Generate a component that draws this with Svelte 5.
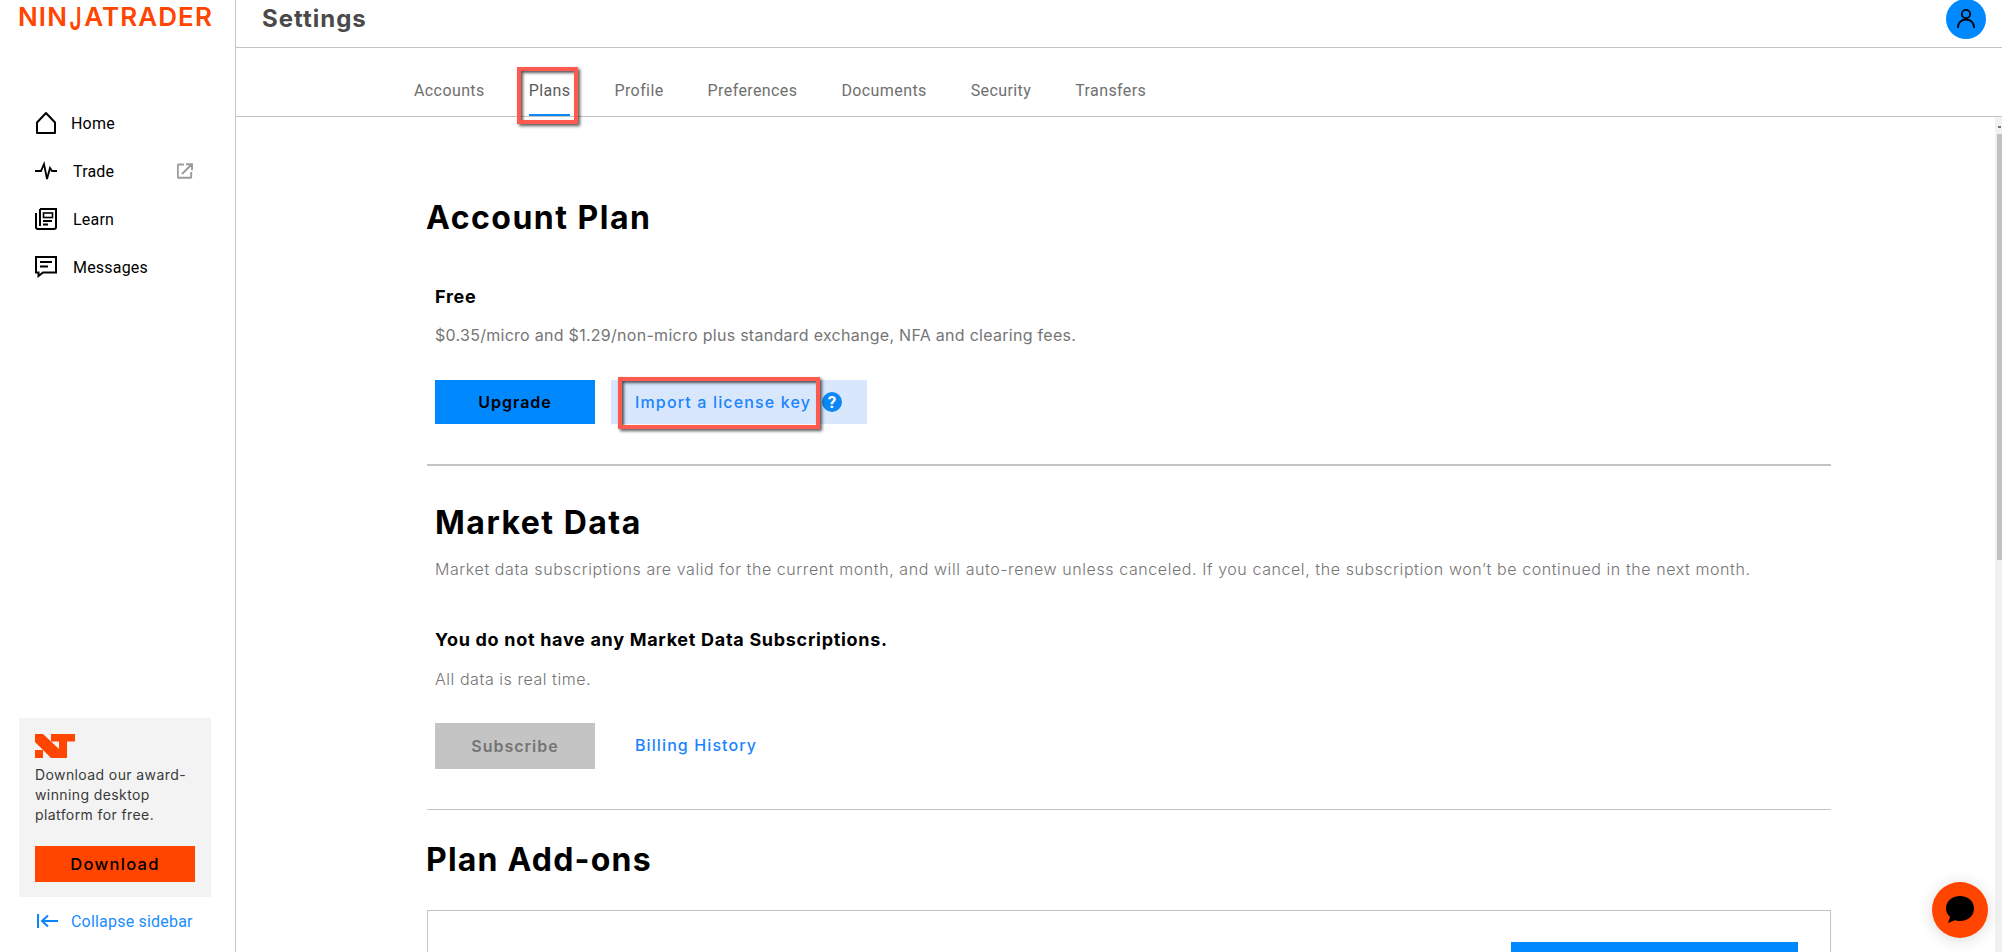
<script>
  const tabs = ['Accounts', 'Plans', 'Profile', 'Preferences', 'Documents', 'Security', 'Transfers'];
</script>

<div class="app">
  <aside class="sidebar">
    <div class="logo">NIN<span class="j">J</span>ATRADER</div>
    <nav class="nav">
      <a class="nav-item">
        <svg class="nav-icon home" width="22" height="24" viewBox="0 0 22 24" fill="none" stroke="#000" stroke-width="2" stroke-linejoin="round"><path d="M2 22V11.5L11 2l9 9.500V22z"/></svg>
        <span>Home</span>
      </a>
      <a class="nav-item">
        <svg class="nav-icon" width="22" height="20" viewBox="0 0 22 20" fill="none" stroke="#000" stroke-width="1.800"><polyline points="0,10 6,10 9,3 12,18 15,7 17,10 22,10"/></svg>
        <span>Trade</span>
        <svg class="ext" width="16" height="16" viewBox="0 0 16 16" fill="none" stroke="#9b9b9b" stroke-width="1.900"><path d="M7 1.500H1.500a.7.700 0 0 0-.7.700v11.600a1 1 0 0 0 1 1h11.700a.7.700 0 0 0 .7-.7V9M5 11l9.500-9.500M9 1.200h6v6"/></svg>
      </a>
      <a class="nav-item">
        <svg class="nav-icon" width="22" height="22" viewBox="0 0 22 22" fill="none" stroke="#000" stroke-width="2"><path d="M5 1h16v18a2 2 0 0 1-2 2H3a2 2 0 0 1-2-2V5M5 1v17"/><rect x="8.500" y="5" width="9" height="4.500" stroke-width="1.600"/><path d="M8 13h9M8 16.500h5" stroke-width="1.800"/></svg>
        <span>Learn</span>
      </a>
      <a class="nav-item">
        <svg class="nav-icon" width="22" height="22" viewBox="0 0 22 22" fill="none" stroke="#000" stroke-width="2"><path d="M1 1h20v15.500H8L3.500 20v-3.500H1z"/><path d="M5 6h12M5 10.500h8"/></svg>
        <span>Messages</span>
      </a>
    </nav>

    <div class="promo">
      <svg class="nt" width="40" height="24" viewBox="0 0 40 24" fill="#ff4500"><polygon points="0,0 8,0 24,15 24,7.500 16,7.500 16,0 40,0 40,7.500 32,7.500 32,24 16,24 0,8"/><rect x="0" y="16" width="8" height="8"/></svg>
      <p>Download our award-winning desktop platform for free.</p>
      <button class="download">Download</button>
    </div>
    <a class="collapse">
      <svg width="22" height="14" viewBox="0 0 22 14" fill="none" stroke="#0a84ff" stroke-width="2"><path d="M1 0v14M21 7H5M11 1.500L5 7l6 5.500"/></svg>
      <span>Collapse sidebar</span>
    </a>
  </aside>

  <div class="main">
    <header class="header">
      <h2>Settings</h2>
      <div class="avatar">
        <svg width="20" height="22" viewBox="0 0 20 22" fill="none" stroke="#000" stroke-width="1.800"><circle cx="10" cy="6" r="4.200"/><path d="M2 20v-1a8 7.500 0 0 1 16 0v1"/></svg>
      </div>
    </header>

    <div class="tabs">
      {#each tabs as t}
        <div class="tab" class:active={t === 'Plans'}>
          {t}
          {#if t === 'Plans'}<span class="mark mark-tab"></span>{/if}
        </div>
      {/each}
    </div>

    <div class="body">
      <div class="content">
        <h1 class="first">Account Plan</h1>
        <div class="indent">
          <h3 class="free">Free</h3>
          <p class="desc">$0.35/micro and $1.29/non-micro plus standard exchange, NFA and clearing fees.</p>
          <div class="actions">
            <button class="btn primary">Upgrade</button>
            <div class="license">
              <span class="license-text">Import a license key<span class="mark mark-license"></span></span>
              <svg width="20" height="20" viewBox="0 0 20 20"><circle cx="10" cy="10" r="10" fill="#0a88f5"/><text x="10" y="16" text-anchor="middle" class="q">?</text></svg>
            </div>
          </div>
        </div>
        <hr class="rule one" />
        <div class="indent">
          <h1 class="market">Market Data</h1>
          <p class="sub">Market data subscriptions are valid for the current month, and will auto-renew unless canceled. If you cancel, the subscription won’t be continued in the next month.</p>
          <h3 class="none">You do not have any Market Data Subscriptions.</h3>
          <p class="real">All data is real time.</p>
          <div class="actions two">
            <button class="btn disabled">Subscribe</button>
            <a class="billing">Billing History</a>
          </div>
        </div>
        <hr class="rule two-r" />
        <h1 class="addons">Plan Add-ons</h1>
        <div class="card"><div class="card-btn"></div></div>
      </div>
      <div class="scrollbar"><span class="arrow"></span><span class="thumb"></span></div>
    </div>
  </div>

  <div class="chat">
    <svg width="30" height="28" viewBox="0 0 30 28"><path d="M15 0c8 0 14 5 14 12.500S23 25 15 25c-2 0-4-.3-5-.7L3 27l2-6C2.500 18.500 1 16 1 12.500 1 5 7 0 15 0z" fill="#000"/></svg>
  </div>
</div>

<style>
  :global(body) { margin: 0; background: #fff; }
  .app {
    display: grid;
    grid-template-columns: 236px 1fr;
    width: 2002px;
    height: 952px;
    overflow: hidden;
    position: relative;
    font-family: Roboto, sans-serif;
    color: #000;
  }
  .sidebar {
    border-right: 1.500px solid #c4c4c4;
    display: flex;
    flex-direction: column;
    height: 952px;
    box-sizing: border-box;
    padding-left: 19px;
  }
  .logo {
    font-family: Inter, sans-serif;
    font-weight: 600;
    font-size: 26px;
    line-height: 24px;
    letter-spacing: 1.100px;
    color: #ff4500;
    margin: 5px 0 0 -1px;
    white-space: nowrap;
  }
  .j {
    display: inline-block;
    transform: scale(.8, 1.2);
    transform-origin: center top;
  }
  .nav {
    display: flex;
    flex-direction: column;
    margin-top: 70px;
    padding-left: 16px;
  }
  .nav-item {
    display: flex;
    align-items: center;
    height: 48px;
    font-size: 16px;
    letter-spacing: .2px;
    width: 158px;
  }
  .nav-icon { flex: none; margin-right: 16px; }
  .nav-icon.home { margin-right: 14px; }
  .ext { margin-left: auto; }
  .promo {
    margin-top: auto;
    width: 192px;
    height: 179px;
    box-sizing: border-box;
    background: #f3f3f3;
    padding: 16px;
  }
  .nt { display: block; }
  .promo p {
    font-family: Inter, sans-serif;
    font-size: 14px;
    line-height: 20px;
    letter-spacing: .4px;
    color: #3a3a3a;
    margin: 7px 0 0;
  }
  .download {
    display: block;
    width: 160px;
    height: 36px;
    margin-top: 21px;
    border: 0;
    background: #ff4500;
    font-family: Inter, sans-serif;
    font-weight: 500;
    font-size: 16.500px;
    letter-spacing: 1.300px;
    color: #000;
  }
  .collapse {
    display: flex;
    align-items: center;
    gap: 12px;
    height: 48px;
    padding-left: 18px;
    margin-bottom: 7px;
    font-size: 16px;
    letter-spacing: .2px;
    color: #1a8cff;
  }
  .main { display: flex; flex-direction: column; min-width: 0; }
  .header {
    height: 48px;
    flex: none;
    display: flex;
    justify-content: space-between;
    box-sizing: border-box;
    border-bottom: 1.500px solid #c4c4c4;
    padding: 0 16px 0 26px;
  }
  .header h2 {
    margin: 4px 0 0;
    font-family: Inter, sans-serif;
    font-weight: 700;
    font-size: 24px;
    line-height: 30px;
    letter-spacing: 1px;
    color: #4a4a4a;
  }
  .avatar {
    width: 40px;
    height: 40px;
    margin-top: -1px;
    border-radius: 50%;
    background: #0088ff;
    display: flex;
    align-items: center;
    justify-content: center;
  }
  .tabs {
    height: 69px;
    flex: none;
    display: flex;
    gap: 44px;
    box-sizing: border-box;
    border-bottom: 1.500px solid #c4c4c4;
    padding-left: 178px;
  }
  .tab {
    position: relative;
    font-size: 16px;
    line-height: 20px;
    letter-spacing: .4px;
    padding-top: 33px;
    color: #6f6f6f;
    white-space: nowrap;
    box-sizing: border-box;
  }
  .tab.active { color: #5a5a5a; border-bottom: 2px solid #0a88f5; }
  .mark {
    position: absolute;
    box-sizing: border-box;
    border: 4px solid #ff5a50;
    box-shadow: 2px 2px 3px rgba(0,0,0,.65), inset 2px 2px 3px rgba(0,0,0,.65);
    pointer-events: none;
  }
  .mark-tab { left: -12px; right: -8px; top: 19px; bottom: -10px; }
  .mark-license { left: -17px; right: -9px; top: -3px; bottom: -5px; }
  .body { flex: 1; display: flex; min-height: 0; overflow: hidden; }
  .content {
    flex: 1;
    padding-left: 191px;
    padding-right: 164px;
    min-width: 0;
  }
  h1 {
    font-family: Inter, sans-serif;
    font-weight: 700;
    font-size: 32px;
    line-height: 36px;
    letter-spacing: 1.500px;
    margin: 0;
    color: #000;
  }
  h1.first { margin: 83px 0 0 -1px; }
  .indent { padding-left: 8px; }
  .free {
    font-family: Inter, sans-serif;
    font-weight: 700;
    font-size: 18px;
    line-height: 22px;
    letter-spacing: .7px;
    margin: 50px 0 0;
  }
  .desc, .sub, .real {
    font-family: Inter, sans-serif;
    font-size: 16px;
    line-height: 20px;
    color: #757575;
    margin: 0;
  }
  .desc { margin-top: 17px; letter-spacing: .28px; }
  .sub, .real { letter-spacing: .58px; font-weight: 300; }
  .real { letter-spacing: .55px; }
  .actions { display: flex; align-items: center; margin-top: 35px; height: 44px; }
  .btn {
    width: 160px;
    height: 44px;
    border: 0;
    font-family: Inter, sans-serif;
    font-weight: 600;
    font-size: 16px;
    letter-spacing: 1px;
  }
  .primary { background: #0088ff; color: #000; }
  .license {
    margin-left: 16px;
    width: 256px;
    height: 44px;
    background: #d9e7fd;
    display: flex;
    align-items: center;
    padding-left: 24px;
    box-sizing: border-box;
    gap: 11px;
  }
  .license-text {
    position: relative;
    font-family: Inter, sans-serif;
    font-weight: 500;
    font-size: 16px;
    letter-spacing: 1.150px;
    line-height: 44px;
    height: 44px;
    color: #1a84ff;
    white-space: nowrap;
  }
  .q { font-family: Roboto, sans-serif; font-weight: 700; font-size: 17px; fill: #fff; }
  .rule { border: 0; height: 1.500px; background: #c4c4c4; margin: 0; }
  .rule.one { margin-top: 40px; }
  .market { margin-top: 39px; }
  .sub { margin-top: 18px; }
  .none {
    font-family: Inter, sans-serif;
    font-weight: 700;
    font-size: 18px;
    line-height: 22px;
    letter-spacing: .7px;
    margin: 50px 0 0;
  }
  .real { margin-top: 18px; }
  .actions.two { height: 46px; margin-top: 34px; }
  .disabled { background: #c4c4c4; color: #757575; height: 46px; }
  .billing {
    margin-left: 40px;
    padding-bottom: 2px;
    font-family: Inter, sans-serif;
    font-weight: 500;
    font-size: 16px;
    letter-spacing: 1.100px;
    color: #1a84ff;
  }
  .rule.two-r { margin-top: 40px; }
  h1.addons { margin: 32px 0 0 -1px; letter-spacing: 1.200px; }
  .card {
    margin-top: 32px;
    height: 200px;
    border: 1.500px solid #c4c4c4;
    box-sizing: border-box;
    padding: 31px 32px 0 0;
    display: flex;
    justify-content: flex-end;
  }
  .card-btn { width: 287px; height: 44px; background: #0088ff; }
  .scrollbar {
    width: 7px;
    flex: none;
    background: #f1f1f1;
    display: flex;
    flex-direction: column;
    align-items: flex-end;
  }
  .arrow {
    width: 3px;
    height: 2px;
    background: #777;
    margin: 9px 1px 6px 0;
  }
  .thumb { width: 5px; height: 426px; background: #c1c1c1; }
  .chat {
    position: absolute;
    left: 1932px;
    top: 882px;
    width: 56px;
    height: 56px;
    border-radius: 50%;
    background: #ff4500;
    box-shadow: 0 2px 16px rgba(0,0,0,.15);
    display: flex;
    align-items: center;
    justify-content: center;
  }
</style>
